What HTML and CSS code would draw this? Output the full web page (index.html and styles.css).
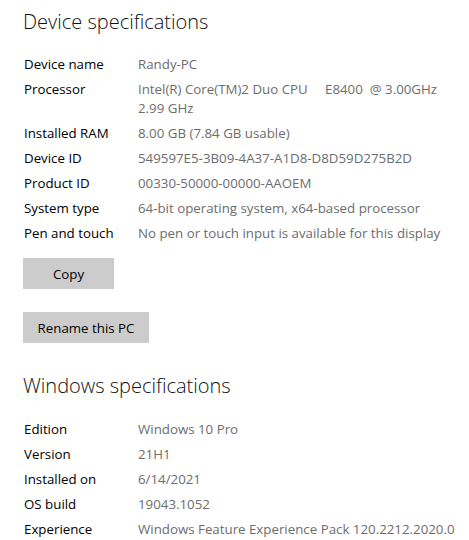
FILE: index.html
```html
<!DOCTYPE html>
<html>
<head>
<meta charset="utf-8">
<link rel="stylesheet" href="styles.css">
</head>
<body>
<div class="page">
  <h1 class="title first">Device specifications</h1>
  <div class="specs">
    <div class="label">Device name</div><div class="value">Randy-PC</div>
    <div class="label">Processor</div><div class="value">Intel(R) Core(TM)2 Duo CPU&nbsp;&nbsp;&nbsp;&nbsp;&nbsp;E8400&nbsp;&nbsp;@ 3.00GHz<br>2.99 GHz</div>
    <div class="label">Installed RAM</div><div class="value">8.00 GB (7.84 GB usable)</div>
    <div class="label">Device ID</div><div class="value">549597E5-3B09-4A37-A1D8-D8D59D275B2D</div>
    <div class="label">Product ID</div><div class="value">00330-50000-00000-AAOEM</div>
    <div class="label">System type</div><div class="value">64-bit operating system, x64-based processor</div>
    <div class="label">Pen and touch</div><div class="value">No pen or touch input is available for this display</div>
  </div>
  <div class="actions">
    <button class="btn btn-copy">Copy</button>
    <button class="btn btn-rename">Rename this PC</button>
  </div>
  <h1 class="title second">Windows specifications</h1>
  <div class="specs">
    <div class="label">Edition</div><div class="value">Windows 10 Pro</div>
    <div class="label">Version</div><div class="value">21H1</div>
    <div class="label">Installed on</div><div class="value">6/14/2021</div>
    <div class="label">OS build</div><div class="value">19043.1052</div>
    <div class="label">Experience</div><div class="value">Windows Feature Experience Pack 120.2212.2020.0</div>
  </div>
</div>
</body>
</html>
```
FILE: styles.css
```css
html, body {
  margin: 0;
  padding: 0;
  background: #ffffff;
}
body {
  font-family: "Open Sans", "Noto Sans", "Liberation Sans", sans-serif;
  color: #000000;
}
.page {
  padding: 8px 0 0 24px;
}
.title {
  margin: 0;
  padding: 0;
  font-size: 20px;
  line-height: 28px;
  font-weight: 300;
  margin-left: -1px;
  color: #111;
}
.title.second {
  margin-top: 29px;
}
.specs {
  display: grid;
  grid-template-columns: 114px auto;
  row-gap: 6px;
  font-size: 13.3px;
  line-height: 19px;
  margin-top: 18.5px;
}
.title.second + .specs {
  margin-top: 19.5px;
}
.label {
  color: #000000;
  white-space: nowrap;
}
.value {
  color: #6d6d6d;
  white-space: nowrap;
}
.actions {
  display: flex;
  flex-direction: column;
  align-items: flex-start;
  gap: 23px;
  margin-top: 15.5px;
}
.btn {
  font-family: inherit;
  font-size: 13.3px;
  color: #000;
  background: #cccccc;
  border: none;
  height: 31px;
  padding: 0;
  margin: 0 0 0 -1px;
  cursor: default;
}
.btn-copy {
  width: 91px;
}
.btn-rename {
  width: 126px;
}
```
